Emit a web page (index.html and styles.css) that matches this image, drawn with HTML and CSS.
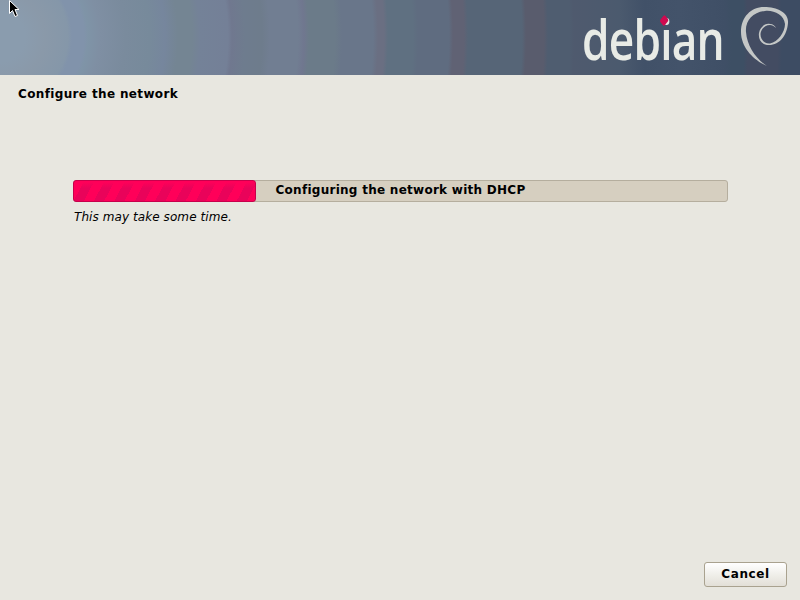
FILE: index.html
```html
<!DOCTYPE html>
<html lang="en">
<head>
  <meta charset="UTF-8">
  <title>Configure the network</title>
  <link rel="stylesheet" href="styles.css">
</head>
<body>

  <header class="banner">
    <span class="wordmark">debian<i class="dot"></i></span>
    <svg class="swirl" viewBox="0 0 80 78" width="80" height="78">
      <path fill="#c4c7c6" d="M47 67C33 61 21 48 21 33C21 18 31 8 44 8C58 8 69 14 68 24C67 36 60 46 49 46C42 46 38 41 39 34C40 28 45 24 50 25C53 25 55 27 56 29C54 27 52 26 50 26C45 26 41 30 40.500 35C40.500 41 45 45 50 44.500C58 43 65 33 65 25C64 16 54 11 45 12C33 13 25 22 26 33C27 47 36 60 47 67Z"/>
    </svg>
  </header>

  <h1 class="title">Configure the network</h1>

  <main class="content">
    <div class="progress">
      <div class="progress-fill" style="width: 28%"></div>
      <span class="progress-label">Configuring the network with DHCP</span>
    </div>
    <p class="note">This may take some time.</p>
  </main>

  <footer class="actions">
    <button class="btn">Cancel</button>
  </footer>

  <svg class="pointer" viewBox="0 0 12 18" width="12" height="18">
    <path fill="#000" stroke="#fff" stroke-width="1" d="M1.5 .5V13.5L4.5 10.5L7 16.5L9.5 15.5L7 9.5H11Z"/>
  </svg>

</body>
</html>
```

FILE: styles.css
```css
html, body {
  height: 100%;
}

body {
  margin: 0;
  display: flex;
  flex-direction: column;
  background: #e8e7e0;
  color: #000;
  font-family: "DejaVu Sans", sans-serif;
  font-size: 12px;
  overflow: hidden;
}

.banner {
  height: 75px;
  flex: none;
  display: flex;
  align-items: center;
  justify-content: flex-end;
  overflow: hidden;
  background: radial-gradient(circle 800px at 0 37px,
    #8a9cae 0, #8a9cae 25px, #8a99a9 45px, #8597a9 68px, #8193ab 72px, #8193ab 84px,
    #7f94a7 88px, #7f8fa3 100px, #7a8b9d 125px, #778a9b 150px, #76869d 165px,
    #748593 178px, #748593 192px, #748298 200px, #748097 228px, #70788f 232px,
    #6e7c8e 245px, #6e7c8c 262px, #717e92 270px, #717e92 298px, #70778f 304px,
    #6b7b89 309px, #6b7b89 335px, #69768a 342px, #69768a 373px, #6a6f82 378px,
    #6a6f82 384px, #5f7081 388px, #5f7081 413px, #5f6c80 418px, #5f6c80 449px,
    #606274 453px, #606274 464px, #566577 468px, #566577 522px, #595c6d 526px,
    #595c6d 544px, #4f5d70 548px, #4f5d70 570px, #4f5a6e 574px, #4b5a6e 620px,
    #415168 645px, #43536a 680px, #3f4f66 725px, #3d4f64 732px, #3d4f64 744px,
    #434c62 748px, #434c62 778px, #3d4c63 782px, #3d4c63 800px);
}

.wordmark {
  position: relative;
  width: 138px;
  font-family: "Open Sans", sans-serif;
  font-size: 56px;
  font-weight: 600;
  line-height: 75px;
  letter-spacing: -1px;
  color: #e8ebe6;
  transform: translateY(1px) scaleX(.79);
  transform-origin: left center;
  white-space: nowrap;
}

.dot {
  position: absolute;
  left: 100px;
  top: 15px;
  width: 8px;
  height: 9px;
  background: #cf0a50;
  transform: rotate(45deg);
  border-radius: 2px;
}

.swirl {
  flex: none;
}

.title {
  margin: 0;
  padding: 11px 18px 0;
  font-size: 12px;
  line-height: 16px;
  font-weight: bold;
  letter-spacing: .36px;
}

.content {
  flex: 1;
  padding: 78px 72px 0 73px;
}

.progress {
  position: relative;
  height: 20px;
  background: #d6cfc0;
  border: 1px solid #b5ae9e;
  border-radius: 3px;
}

.progress-fill {
  height: calc(100% + 2px);
  margin: -1px;
  box-sizing: border-box;
  border: 1px solid #c8004c;
  border-radius: 3px;
  background:
    linear-gradient(#ff0059 5%, rgba(255,0,89,0) 35%),
    repeating-linear-gradient(118deg, #ff0059 0, #ff0059 9px, #e9035a 9px, #e9035a 18px);
}

.progress-label {
  position: absolute;
  inset: 0;
  text-align: center;
  line-height: 19px;
  font-weight: bold;
  letter-spacing: .27px;
}

.note {
  margin: 7px 0 0 1px;
  font-style: italic;
  line-height: 16px;
  letter-spacing: .08px;
}

.actions {
  display: flex;
  justify-content: flex-end;
  padding: 0 13px 13px 0;
}

.btn {
  width: 83px;
  height: 25px;
  padding: 0 0 2px;
  font: bold 12px "DejaVu Sans", sans-serif;
  letter-spacing: .6px;
  color: #000;
  background: linear-gradient(#ffffff, #f0efea 50%, #e2dfd7);
  border: 1px solid #a9a28f;
  border-radius: 3px;
}

.pointer {
  position: absolute;
  left: 8px;
  top: 0;
}
```
